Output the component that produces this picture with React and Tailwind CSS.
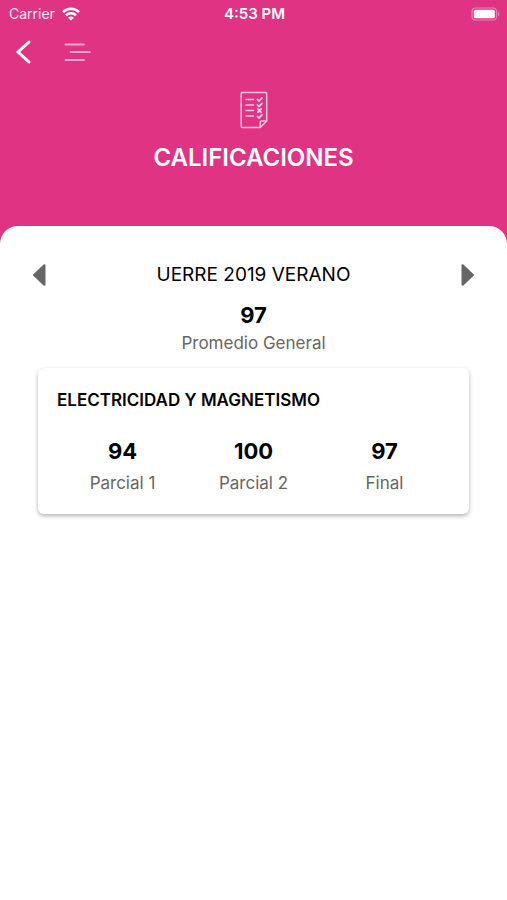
const grades = [
  { value: "94", label: "Parcial 1" },
  { value: "100", label: "Parcial 2" },
  { value: "97", label: "Final" },
];

function StatusBar() {
  return (
    <div className="grid h-7 grid-cols-3 items-center pl-[9px] pr-[7px] text-white">
      <div className="flex items-center gap-[7px] text-sm">
        <span className="opacity-90">Carrier</span>
        <svg width="18" height="14" viewBox="0 0 18 14" fill="none" stroke="currentColor" strokeWidth="2.6" aria-hidden="true">
          <path d="M1 5.1C5.5.7 12.5.7 17 5.1" />
          <path d="M4 8.3c2.8-2.7 7.2-2.7 10 0" />
          <path d="M9 13.6 6 10.7c1.6-1.5 4.4-1.5 6 0z" fill="currentColor" stroke="none" />
        </svg>
      </div>
      <span className="text-center text-[15px] font-semibold">4:53 PM</span>
      <svg className="justify-self-end" width="29" height="14" viewBox="0 0 29 14" aria-hidden="true">
        <rect x="1" y="1" width="24.5" height="12" rx="3.5" fill="none" stroke="#ee7fb2" strokeWidth="1.2" />
        <rect x="2.8" y="2.8" width="21" height="8.4" rx="1.5" fill="white" />
        <path d="M27 4.8c2 .8 2 3.6 0 4.4z" fill="#ee7fb2" />
      </svg>
    </div>
  );
}

function ChecklistIcon() {
  return (
    <svg width="30" height="38" viewBox="0 0 30 38" fill="none" stroke="#fbc9e0" strokeWidth="1.5" strokeLinecap="round" strokeLinejoin="round" aria-hidden="true">
      <path d="M2.5 1.5h24c.8 0 1.2.4 1.2 1.2V30l-6.5 6.5H3.4c-.8 0-1.2-.4-1.2-1.2V2.5c0-.6.2-1 .8-1z" />
      <path d="M21.2 36.2v-4.8c0-.9.5-1.4 1.4-1.4h4.8" />
      <path d="M7 8.5h7.5M7 14h7.5M7 19.5h7.5M7 25h7.5" />
      <path d="m18.5 8.5 1.5 1.7 3-3.3M18.5 14l1.5 1.7 3-3.3M18.8 18l3.4 3.4m0-3.4-3.4 3.4M18.5 25.5l1.5 1.7 3-3.3" strokeWidth="1.8" />
    </svg>
  );
}

function Stat({ value, label, gap }) {
  return (
    <div className={`flex flex-col items-center ${gap}`}>
      <dt className="order-2 text-[17px] leading-6 text-[#666]">{label}</dt>
      <dd className="text-[22px] leading-7 font-bold text-black">{value}</dd>
    </div>
  );
}

export default function App() {
  return (
    <div className="flex min-h-screen flex-col bg-[#e13383] font-['Inter','Liberation_Sans',sans-serif]">
      <header>
        <StatusBar />
        <nav className="flex h-12 items-center gap-[30px] pl-[14px] text-white">
          <button type="button" aria-label="Volver">
            <svg width="20" height="26" viewBox="0 0 20 26" fill="none" stroke="currentColor" strokeWidth="3" strokeLinecap="round">
              <path d="M15 3 4 13l11 10" />
            </svg>
          </button>
          <button type="button" aria-label="Menú">
            <svg width="28" height="20" viewBox="0 0 28 20" fill="none" stroke="#f4a9cc" strokeWidth="1.8" strokeLinecap="round">
              <path d="M1.5 2.5H20M6.5 10H26M1.5 18H20" />
            </svg>
          </button>
        </nav>
        <div className="flex flex-col items-center pt-[15px] pb-[52px]">
          <ChecklistIcon />
          <h1 className="mt-[13px] text-2xl leading-8 font-semibold text-white">CALIFICACIONES</h1>
        </div>
      </header>

      <main className="flex-1 rounded-t-[18px] bg-white px-[38px] pt-[34px]">
        <div className="-mx-[6px] flex items-center justify-between">
          <button type="button" aria-label="Periodo anterior">
            <svg width="14" height="22" viewBox="0 0 14 22" fill="#666">
              <path d="M11.6.6 1.4 10.2c-.6.5-.6 1.1 0 1.6l10.2 9.6c.8.7 1.9.3 1.9-.8V1.4c0-1.1-1.1-1.5-1.9-.8z" />
            </svg>
          </button>
          <h2 className="text-[19px] leading-[30px] text-black">UERRE 2019 VERANO</h2>
          <button type="button" aria-label="Periodo siguiente">
            <svg width="14" height="22" viewBox="0 0 14 22" fill="#666">
              <path d="M2.4.6l10.2 9.6c.6.5.6 1.1 0 1.6L2.4 21.4c-.8.7-1.9.3-1.9-.8V1.4C.5.3 1.6-.1 2.4.6z" />
            </svg>
          </button>
        </div>

        <dl className="mt-[11px]">
          <Stat value="97" label="Promedio General" gap="gap-0.5" />
        </dl>

        <section className="mt-[13px] rounded-md bg-white px-[19px] pt-5 pb-[19px] shadow-[0_2px_4px_rgba(0,0,0,0.3)]">
          <h3 className="text-[17px] leading-6 font-semibold text-black">ELECTRICIDAD Y MAGNETISMO</h3>
          <dl className="mt-[25px] grid grid-cols-3">
            {grades.map((grade) => (
              <Stat key={grade.label} value={grade.value} label={grade.label} gap="gap-1.5" />
            ))}
          </dl>
        </section>
      </main>
    </div>
  );
}
